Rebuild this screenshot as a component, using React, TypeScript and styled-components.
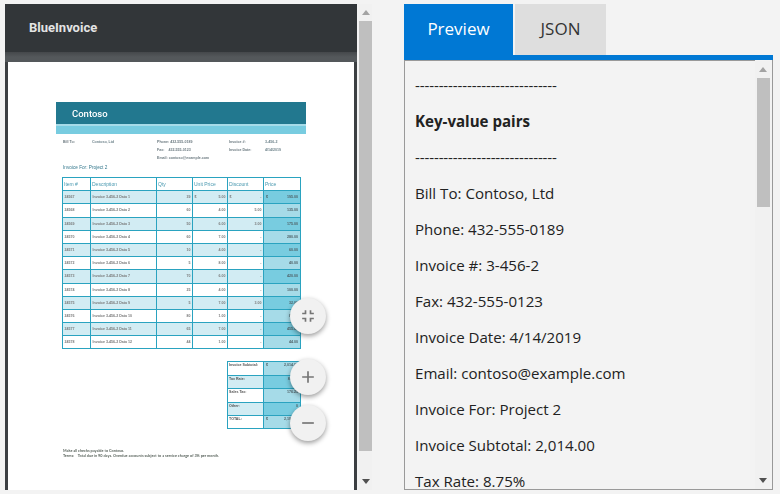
import styled, { createGlobalStyle } from "styled-components";

const rows = [
  ["24567", "Invoice 3-456-2 Data 1", "39", "5.00", "-", "195.00"],
  ["24568", "Invoice 3-456-2 Data 2", "60", "4.00", "5.00", "135.00"],
  ["24569", "Invoice 3-456-2 Data 3", "50", "6.00", "3.00", "175.00"],
  ["24570", "Invoice 3-456-2 Data 4", "60", "7.00", "-", "280.00"],
  ["24571", "Invoice 3-456-2 Data 5", "10", "4.00", "-", "60.00"],
  ["24572", "Invoice 3-456-2 Data 6", "5", "8.00", "-", "40.00"],
  ["24573", "Invoice 3-456-2 Data 7", "70", "6.00", "-", "420.00"],
  ["24574", "Invoice 3-456-2 Data 8", "25", "4.00", "-", "100.00"],
  ["24575", "Invoice 3-456-2 Data 9", "5", "7.00", "3.00", "32.00"],
  ["24576", "Invoice 3-456-2 Data 10", "80", "1.00", "-", "80.00"],
  ["24577", "Invoice 3-456-2 Data 11", "65", "7.00", "-", "455.00"],
  ["24578", "Invoice 3-456-2 Data 12", "44", "1.00", "-", "44.00"],
];

const totals = [
  ["Invoice Subtotal:", "2,014.00", true],
  ["Tax Rate:", "8.75%", false],
  ["Sales Tax:", "176.23", false],
  ["Other:", "0", false],
  ["TOTAL:", "2,190.23", true],
] as const;

const lines = [
  "Bill To: Contoso, Ltd",
  "Phone: 432-555-0189",
  "Invoice #: 3-456-2",
  "Fax: 432-555-0123",
  "Invoice Date: 4/14/2019",
  "Email: contoso@example.com",
  "Invoice For: Project 2",
  "Invoice Subtotal: 2,014.00",
  "Tax Rate: 8.75%",
];

const dashes = "------------------------------";

const Scrollbar = ({ inset }: { inset?: boolean }) => (
  <ScrollTrack $inset={inset}>
    <svg width="8" height="5" viewBox="0 0 8 5"><path d="M4 0 8 5H0z" fill="#a3a3a3" /></svg>
    <Thumb $inset={inset} />
    <svg width="8" height="5" viewBox="0 0 8 5"><path d="M0 0h8L4 5z" fill="#505050" /></svg>
  </ScrollTrack>
);

const Invoice = () => (
  <InvoiceSheet>
    <Banner>Contoso</Banner>
    <InfoGrid>
      <b>Bill To:</b><span>Contoso, Ltd</span>
      <b>Phone: 432-555-0189</b><b>Invoice #:</b><span>3-456-2</span>
      <i /><i /><b>Fax: &nbsp; &nbsp;432-555-0123</b><b>Invoice Date:</b><span>4/14/2019</span>
      <i /><i /><b>Email: contoso@example.com</b>
    </InfoGrid>
    <InvoiceFor>Invoice For: Project 2</InvoiceFor>
    <Items>
      <colgroup>
        <col width="28" /><col width="66" /><col width="36" /><col width="35" /><col width="36" /><col width="37" />
      </colgroup>
      <thead>
        <tr>
          {["Item #", "Description", "Qty", "Unit Price", "Discount", "Price"].map((h) => (
            <HeadCell key={h}>{h}</HeadCell>
          ))}
        </tr>
      </thead>
      <tbody>
        {rows.map((r, i) => (
          <tr key={r[0]}>
            <ItemCell $odd={i % 2 === 0}>{r[0]}</ItemCell>
            <ItemCell $odd={i % 2 === 0}>{r[1]}</ItemCell>
            <ItemCell $odd={i % 2 === 0} $right>{r[2]}</ItemCell>
            <ItemCell $odd={i % 2 === 0} $right>
              {i === 0 && <Dollar>$</Dollar>}
              {r[3]}
            </ItemCell>
            <ItemCell $odd={i % 2 === 0} $right>
              {i === 0 && <Dollar>$</Dollar>}
              {r[4]}
            </ItemCell>
            <PriceCell $odd={i % 2 === 0}>
              {i === 0 && <Dollar>$</Dollar>}
              {r[5]}
            </PriceCell>
          </tr>
        ))}
      </tbody>
    </Items>
    <Totals>
      <colgroup>
        <col width="36" /><col width="37" />
      </colgroup>
      <tbody>
        {totals.map(([label, value, money], i) => (
          <tr key={label}>
            <TotalLabel $odd={i % 2 === 1}>{label}</TotalLabel>
            <TotalValue $odd={i % 2 === 1}>
              {money && <Dollar>$</Dollar>}
              {value}
            </TotalValue>
          </tr>
        ))}
      </tbody>
    </Totals>
    <Terms>
      <div>Make all checks payable to Contoso.</div>
      <div>Terms: &nbsp; &nbsp;Total due in 90 days. Overdue accounts subject to a service charge of 3% per month.</div>
    </Terms>
  </InvoiceSheet>
);

function App() {
  return (
    <>
      <GlobalStyle />
      <AppContainer>
        <LeftColumn>
          <PdfPane>
            <PdfHeader>BlueInvoice</PdfHeader>
            <PdfBody>
              <PdfPage>
                <Invoice />
              </PdfPage>
            </PdfBody>
            <FabStack>
              <Fab $gap={25}>
                <svg width="20" height="20" viewBox="0 0 24 24"><path d="M5 16h3v3h2v-5H5zm3-8H5v2h5V5H8zm6 11h2v-3h3v-2h-5zm2-11V5h-2v5h5V8z" fill="#757575" /></svg>
              </Fab>
              <Fab $gap={10}>
                <svg width="20" height="20" viewBox="0 0 24 24"><path d="M19 13h-6v6h-2v-6H5v-2h6V5h2v6h6z" fill="#757575" /></svg>
              </Fab>
              <Fab>
                <svg width="20" height="20" viewBox="0 0 24 24"><path d="M19 13H5v-2h14z" fill="#757575" /></svg>
              </Fab>
            </FabStack>
          </PdfPane>
          <Scrollbar />
        </LeftColumn>
        <RightColumn>
          <Tabs>
            <Tab $active $width={109}>Preview</Tab>
            <Tab $width={91}>JSON</Tab>
          </Tabs>
          <ResultBox>
            <ResultText>
              <Dashes>{dashes}</Dashes>
              <p><strong>Key-value pairs</strong></p>
              <Dashes>{dashes}</Dashes>
              {lines.map((l) => (
                <p key={l}>{l}</p>
              ))}
            </ResultText>
            <Scrollbar inset />
          </ResultBox>
        </RightColumn>
      </AppContainer>
    </>
  );
}

const GlobalStyle = createGlobalStyle`
  html, body {
    margin: 0;
    height: 100%;
    background: #f3f3f3;
    overflow: hidden;
  }
  #root {
    height: 100%;
  }
`;

const AppContainer = styled.div`
  display: flex;
  width: 780px;
  height: 494px;
  padding: 4px 7px 4px 5px;
  box-sizing: border-box;
  background: #f3f3f3;
  font-family: "Open Sans", sans-serif;
`;

const LeftColumn = styled.div`
  display: flex;
  width: 372px;
  margin-right: 27px;
`;

const PdfPane = styled.div`
  position: relative;
  display: flex;
  flex-direction: column;
  width: 352px;
  background: #3c3f42;
  overflow: hidden;
`;

const PdfHeader = styled.div`
  height: 48px;
  padding: 0 0 1px 24px;
  box-sizing: border-box;
  flex: none;
  display: flex;
  align-items: center;
  background: #323639;
  color: #e4e4e4;
  font: 700 13px Roboto, sans-serif;
`;

const PdfBody = styled.div`
  flex: 1;
  padding-top: 10px;
  background: linear-gradient(#45484b 0, #54585b 5px, #54585b 10px, #3c3f42 10px);
  display: flex;
  justify-content: center;
  overflow: hidden;
`;

const PdfPage = styled.div`
  width: 346px;
  background: #fff;
`;

const InvoiceSheet = styled.div`
  margin: 40px 48px 0;
  width: 250px;
  font-family: "Liberation Sans", sans-serif;
  color: #555;
  filter: blur(0.3px);
`;

const Banner = styled.div`
  height: 22px;
  padding-left: 16px;
  display: flex;
  align-items: center;
  background: #22788f;
  border-bottom: 2px solid #a6dbe8;
  box-shadow: 0 8px 0 #78cce0;
  color: #fff;
  font: 500 9.5px Roboto, sans-serif;
  margin-bottom: 8px;
`;

const InfoGrid = styled.div`
  display: grid;
  grid-template-columns: 29px 65px 72px 36px 1fr;
  grid-auto-rows: 8px;
  padding: 4px 0 0 7px;
  font-size: 3.6px;
  line-height: 8px;
  color: #6c7a80;

  b {
    font-weight: 700;
  }
  span {
    color: #6f848c;
    font-weight: 700;
  }
`;

const InvoiceFor = styled.div`
  margin: 2px 0 0 7px;
  font-size: 4.7px;
  line-height: 8px;
  color: #34788d;
`;

const Items = styled.table`
  margin: 5px 0 0 6px;
  width: 238px;
  table-layout: fixed;
  border-collapse: collapse;
  border: 1px solid #2aa3c0;
`;

const HeadCell = styled.th`
  box-sizing: border-box;
  height: 13.2px;
  padding: 0 1px;
  border: 1px solid #2aa3c0;
  background: #fff;
  color: #4a99b0;
  font-size: 5px;
  font-weight: 400;
  text-align: left;
  white-space: nowrap;
  overflow: hidden;
`;

const ItemCell = styled.td<{ $odd?: boolean; $right?: boolean }>`
  box-sizing: border-box;
  height: 13.2px;
  padding: 0 1.5px;
  border: 1px solid #2aa3c0;
  background: ${(p) => (p.$odd ? "#d2ecf3" : "#fff")};
  color: #7a7a7a;
  font-size: 3.6px;
  line-height: 4px;
  font-weight: 700;
  text-align: ${(p) => (p.$right ? "right" : "left")};
  white-space: nowrap;
  overflow: hidden;
`;

const PriceCell = styled.td<{ $odd?: boolean }>`
  box-sizing: border-box;
  height: 13.2px;
  padding: 0 2px;
  border: 1px solid #2aa3c0;
  background: ${(p) => (p.$odd ? "#78cce0" : "#a6dbe8")};
  color: #4f5f65;
  font-size: 3.6px;
  line-height: 4px;
  font-weight: 700;
  text-align: right;
  white-space: nowrap;
  overflow: hidden;
`;

const Totals = styled.table`
  margin: 12px 0 0 171px;
  width: 73px;
  table-layout: fixed;
  border-collapse: collapse;
  border: 1px solid #2aa3c0;
`;

const TotalLabel = styled.td<{ $odd?: boolean }>`
  box-sizing: border-box;
  height: 13.4px;
  padding: 1px;
  border: 1px solid #2aa3c0;
  background: ${(p) => (p.$odd ? "#d2ecf3" : "#fff")};
  color: #555;
  font-size: 3.6px;
  line-height: 4px;
  font-weight: 700;
  vertical-align: top;
  white-space: nowrap;
  overflow: hidden;
`;

const TotalValue = styled.td<{ $odd?: boolean }>`
  box-sizing: border-box;
  height: 13.4px;
  padding: 1px 2px;
  border: 1px solid #2aa3c0;
  background: ${(p) => (p.$odd ? "#78cce0" : "#a6dbe8")};
  color: #4f5f65;
  font-size: 3.6px;
  line-height: 4px;
  font-weight: 700;
  text-align: right;
  vertical-align: top;
  white-space: nowrap;
  overflow: hidden;
`;

const Dollar = styled.span`
  float: left;
`;

const Terms = styled.div`
  margin: 19px 0 0 7px;
  font: 700 3.8px/5px Lato, sans-serif;
  color: #5c665f;
  white-space: nowrap;
`;

const FabStack = styled.div`
  position: absolute;
  right: 31px;
  top: 294px;
  display: flex;
  flex-direction: column;
`;

const Fab = styled.div<{ $gap?: number }>`
  width: 36px;
  height: 36px;
  margin-bottom: ${(p) => p.$gap ?? 0}px;
  border-radius: 50%;
  background: #f1f1f1;
  box-shadow: 0 2px 5px rgba(0, 0, 0, 0.4);
  display: flex;
  align-items: center;
  justify-content: center;
`;

const ScrollTrack = styled.div<{ $inset?: boolean }>`
  width: ${(p) => (p.$inset ? "15px" : "13px")};
  margin: ${(p) => (p.$inset ? "6px 2px 0 0" : "0 0 0 2px")};
  flex: none;
  display: flex;
  flex-direction: column;
  align-items: ${(p) => (p.$inset ? "flex-end" : "center")};
  justify-content: space-between;
  padding: ${(p) => (p.$inset ? "6px 3px 6px 0" : "6px 0")};
  box-sizing: border-box;
  background: #f1f1f1;

  svg {
    flex: none;
  }
`;

const Thumb = styled.div<{ $inset?: boolean }>`
  width: 13px;
  flex: 1;
  margin: ${(p) => (p.$inset ? "6px -3px 271px 0" : "6px 0 28px")};
  background: #bfbfbf;
`;

const RightColumn = styled.div`
  flex: 1;
  display: flex;
  flex-direction: column;
  min-width: 0;
`;

const Tabs = styled.div`
  display: flex;
  gap: 2px;
  height: 51px;
  flex: none;
`;

const Tab = styled.div<{ $active?: boolean; $width: number }>`
  width: ${(p) => p.$width}px;
  padding-bottom: 2px;
  box-sizing: border-box;
  display: flex;
  align-items: center;
  justify-content: center;
  background: ${(p) => (p.$active ? "#0078d4" : "#dedede")};
  color: ${(p) => (p.$active ? "#fff" : "#333")};
  font-size: 17px;
`;

const ResultBox = styled.div`
  flex: 1;
  display: flex;
  min-height: 0;
  border: 1px solid #999;
  border-top: 0;
  position: relative;
  &::before {
    content: "";
    position: absolute;
    left: -1px;
    right: -1px;
    top: 0;
    height: 5px;
    background: #0078d4;
  }
`;

const ResultText = styled.div`
  flex: 1;
  min-width: 0;
  padding: 0 0 0 10px;
  margin-top: 5px;
  border-top: 1px solid #999;
  overflow: hidden;
  color: #222;
  font-size: 15.1px;
  line-height: 20px;

  p {
    margin: 0 0 16px;
    white-space: nowrap;
  }
  p:first-child {
    margin-top: 14px;
  }
  strong {
    font-weight: 700;
  }
`;

const Dashes = styled.p`
  letter-spacing: -0.13px;
`;

export default App;
